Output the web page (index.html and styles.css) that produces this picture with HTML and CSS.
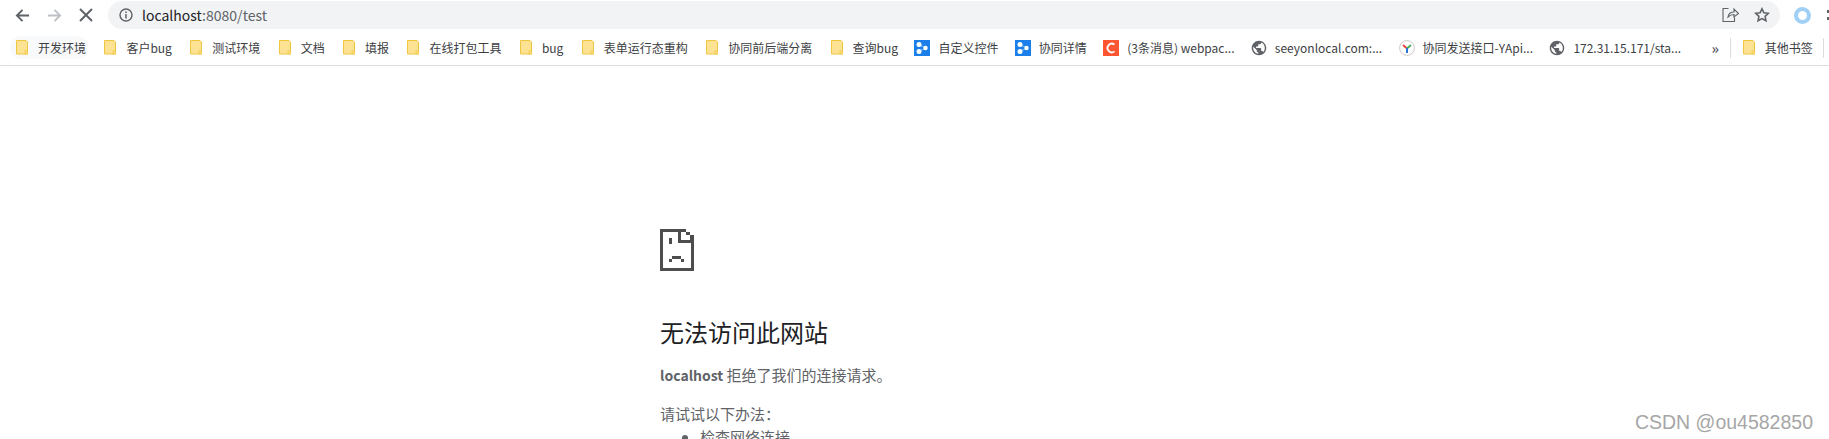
FILE: index.html
```html
<!DOCTYPE html>
<html>

<head>
  <title>localhost:8080/test</title>
  <link rel="stylesheet" href="styles.css">
</head>

<body>
  <svg class="sprites" width="0" height="0">
    <symbol id="folder" viewBox="0 0 12 15">
      <path d="M.5.5h9.5l1.500 1.500v12H.5z" fill="#fde293" stroke="#efc63f"/>
      <rect x="9" y="11" width="2.500" height="3" fill="#fde293" stroke="#efc63f" stroke-width=".8"/>
    </symbol>
    <symbol id="blue" viewBox="0 0 16 16">
      <rect width="16" height="16" fill="#1a7fe8"/>
      <circle cx="5" cy="4.500" r="2.500" fill="#fff"/>
      <circle cx="5" cy="11.500" r="2.500" fill="#fff"/>
      <circle cx="11.500" cy="8" r="2.200" fill="#fff"/>
      <path d="M5 4.500 11.500 8 5 11.500" fill="none" stroke="#fff" stroke-width=".5"/>
    </symbol>
    <symbol id="globe" viewBox="1 1 22 22">
      <path fill="#5f6368" d="M12 2C6.480 2 2 6.480 2 12s4.480 10 10 10 10-4.480 10-10S17.520 2 12 2zm-1 17.930c-3.950-.49-7-3.850-7-7.930 0-.62.08-1.210.21-1.790L9 15v1c0 1.100.9 2 2 2v1.930zm6.900-2.540c-.26-.81-1-1.390-1.900-1.390h-1v-3c0-.55-.45-1-1-1H8v-2h2c.55 0 1-.45 1-1V7h2c1.100 0 2-.9 2-2v-.41c2.930 1.190 5 4.060 5 7.410 0 2.080-.8 3.970-2.100 5.390z"/>
    </symbol>
    <symbol id="csdn" viewBox="0 0 16 16">
      <rect width="16" height="16" fill="#fc5531"/>
      <path d="M11.500 4.600A4.300 4.300 0 1 0 11.500 11.400" fill="none" stroke="#fff" stroke-width="1.800"/>
    </symbol>
    <symbol id="yapi" viewBox="0 0 16 16">
      <circle cx="8" cy="8" r="7.400" fill="#fff" stroke="#c9c9c9"/>
      <path d="M8 8.500 4 5" stroke="#e8453c" stroke-width="2" fill="none"/>
      <path d="M8 8.500 12 5" stroke="#49b35b" stroke-width="2" fill="none"/>
      <path d="M8 8V13" stroke="#2a74d8" stroke-width="2" fill="none"/>
    </symbol>
  </svg>

  <div class="toolbar">
    <div class="nav-btn">
      <svg width="15" height="15" viewBox="0 0 16 16"><path d="M15 8H2M8 2 2 8l6 6" fill="none" stroke="#5f6368" stroke-width="2"/></svg>
    </div>
    <div class="nav-btn">
      <svg width="15" height="15" viewBox="0 0 16 16"><path d="M1 8h13M8 2l6 6-6 6" fill="none" stroke="#bdc1c6" stroke-width="2"/></svg>
    </div>
    <div class="nav-btn">
      <svg width="14" height="14" viewBox="0 0 14 14"><path d="M1 1l12 12M13 1 1 13" fill="none" stroke="#5f6368" stroke-width="2"/></svg>
    </div>
    <div class="omnibox">
      <svg class="info-icon" width="14" height="14" viewBox="0 0 14 14">
        <circle cx="7" cy="7" r="6" fill="none" stroke="#5f6368" stroke-width="1.400"/>
        <path d="M7 6v4.500M7 3.500v1.500" stroke="#5f6368" stroke-width="1.500"/>
      </svg>
      <span class="url"><span class="url-host">localhost</span>:8080/test</span>
      <svg class="omni-action" width="17" height="16" viewBox="0 0 17 16"><path d="M6.500 1.500H1v13h11.500v-4M6 10c.5-3 3-5 6-5V2l4.500 4.500L12 10V7.500c-2.500 0-4.500 1-6 2.500z" fill="none" stroke="#5f6368" stroke-width="1.100"/></svg>
      <svg class="omni-action" width="16" height="16" viewBox="0 0 16 16"><path d="M8 1.800l1.900 4 4.400.500-3.200 3 .8 4.400L8 11.600l-3.900 2.100.8-4.400-3.200-3 4.400-.500z" fill="none" stroke="#5f6368" stroke-width="1.600"/></svg>
    </div>
    <div class="profile-ring"></div>
    <div class="menu-dots"><i></i><i></i></div>
  </div>

  <div class="bookmarks">
    <a class="mark mark-hover"><svg class="folder"><use href="#folder"/></svg>开发环境</a>
    <a class="mark"><svg class="folder"><use href="#folder"/></svg>客户bug</a>
    <a class="mark"><svg class="folder"><use href="#folder"/></svg>测试环境</a>
    <a class="mark"><svg class="folder"><use href="#folder"/></svg>文档</a>
    <a class="mark"><svg class="folder"><use href="#folder"/></svg>填报</a>
    <a class="mark"><svg class="folder"><use href="#folder"/></svg>在线打包工具</a>
    <a class="mark"><svg class="folder"><use href="#folder"/></svg>bug</a>
    <a class="mark"><svg class="folder"><use href="#folder"/></svg>表单运行态重构</a>
    <a class="mark"><svg class="folder"><use href="#folder"/></svg>协同前后端分离</a>
    <a class="mark"><svg class="folder"><use href="#folder"/></svg>查询bug</a>
    <a class="mark"><svg class="fav"><use href="#blue"/></svg>自定义控件</a>
    <a class="mark"><svg class="fav"><use href="#blue"/></svg>协同详情</a>
    <a class="mark"><svg class="fav"><use href="#csdn"/></svg>(3条消息) webpac...</a>
    <a class="mark"><svg class="fav"><use href="#globe"/></svg>seeyonlocal.com:...</a>
    <a class="mark"><svg class="fav"><use href="#yapi"/></svg>协同发送接口-YApi...</a>
    <a class="mark"><svg class="fav"><use href="#globe"/></svg>172.31.15.171/sta...</a>
    <span class="more">»</span>
    <span class="bar-sep"></span>
    <a class="mark mark-other"><svg class="folder"><use href="#folder"/></svg>其他书签</a>
    <span class="bar-sep bar-sep-end"></span>
  </div>

  <div class="error-page">
    <svg class="sad-page" width="34" height="42" viewBox="0 0 34 42" shape-rendering="crispEdges">
      <path fill-rule="evenodd" d="M0 0h26v3h4v3h4v36H0zM3 3v36h28V14H18V3z" fill="#4d4d4d"/>
      <path d="M21 3h5v3h4v5h-9z" fill="#fff"/>
      <path d="M9 9h3v6H9zM12 27h9v3h3v3h-3v-3H12v3H9v-3h3z" fill="#4d4d4d"/>
    </svg>
    <h1>无法访问此网站</h1>
    <p class="reason"><strong>localhost</strong> 拒绝了我们的连接请求。</p>
    <p class="try">请试试以下办法：</p>
    <ul>
      <li>检查网络连接</li>
    </ul>
  </div>

  <div class="watermark">CSDN @ou4582850</div>
</body>

</html>
```

FILE: styles.css
```css
html, body {
  margin: 0;
  height: 439px;
  overflow: hidden;
  background-color: #fff;
}

body {
  position: relative;
  font-family: "Noto Sans CJK SC", "Noto Sans", sans-serif;
  color: #3c4043;
}

.sprites {
  position: absolute;
}

.toolbar {
  display: flex;
  align-items: center;
  height: 30px;
  padding-left: 6px;
  overflow: hidden;
}

.nav-btn {
  width: 32px;
  display: flex;
  justify-content: center;
}

.omnibox {
  flex: 1;
  display: flex;
  align-items: center;
  height: 28px;
  margin-left: 6px;
  padding: 0 10px 0 11px;
  background-color: #f1f3f4;
  border-radius: 14px;
}

.info-icon {
  margin-right: 9px;
}

.url {
  flex: 1;
  font-size: 14px;
  color: #5f6368;
}

.url-host {
  color: #202124;
}

.omni-action {
  margin-left: 15px;
}

.profile-ring {
  width: 9px;
  height: 9px;
  margin-left: 14px;
  border: 4px solid #a0d0f5;
  border-radius: 50%;
}

.menu-dots {
  display: flex;
  flex-direction: column;
  gap: 4px;
  margin-left: 16px;
  margin-right: -1px;
}

.menu-dots i {
  width: 3px;
  height: 3px;
  background-color: #5f6368;
}

.bookmarks {
  display: flex;
  align-items: center;
  height: 35px;
  padding-left: 14px;
  border-bottom: 1px solid #dadce0;
  font-size: 12px;
  white-space: nowrap;
}

.mark {
  display: flex;
  align-items: center;
  margin-right: 16.4px;
}

.mark-hover {
  margin-left: -4px;
  margin-right: 14.4px;
  padding: 3px 2px 3px 4px;
  background-color: #f8f9fa;
  border-radius: 12px;
}

.mark-other {
  margin-right: 10px;
}

.folder {
  width: 12px;
  height: 15px;
  margin-left: 2px;
  margin-right: 10px;
}

.fav {
  width: 16px;
  height: 16px;
  margin-right: 8px;
}

.more {
  margin-left: 14px;
  font-weight: bold;
  font-size: 14px;
  color: #5f6368;
}

.bar-sep {
  flex: none;
  width: 1px;
  height: 20px;
  margin: 0 10px 0 11px;
  background-color: #dadce0;
}

.bar-sep-end {
  margin: 0;
}

.error-page {
  margin-left: 660px;
  padding-top: 163px;
  color: #5f6368;
  font-size: 15px;
}

.sad-page {
  display: block;
}

h1 {
  margin: 43px 0 0;
  font-size: 24px;
  font-weight: 400;
  line-height: 36px;
  color: #202124;
}

.reason {
  margin: 13px 0 0;
  line-height: 24px;
}

.reason strong {
  font-size: 14px;
}

.try {
  margin: 15px 0 0;
  line-height: 24px;
}

ul {
  margin: -1px 0 0;
  padding-left: 40px;
  line-height: 24px;
}

.watermark {
  position: absolute;
  right: 16px;
  bottom: 5px;
  font-family: "Liberation Sans", sans-serif;
  font-size: 19.5px;
  color: #a6a6a6;
}
```
